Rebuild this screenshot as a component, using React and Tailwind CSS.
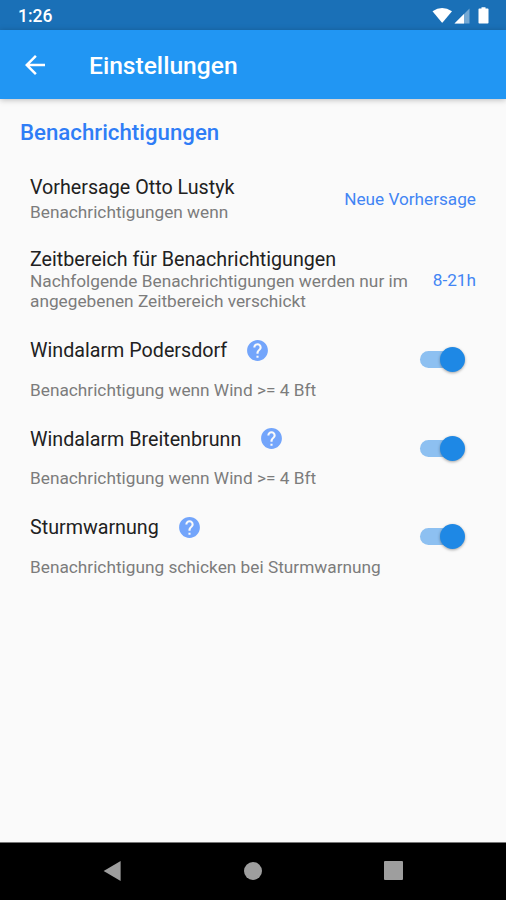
import React from "react";

function HelpIcon() {
  return (
    <svg viewBox="0 0 24 24" className="size-[25px] shrink-0" fill="#73a5fb">
      <path d="M12 2C6.48 2 2 6.48 2 12s4.48 10 10 10 10-4.480 10-10S17.520 2 12 2zm1 17h-2v-2h2v2zm2.070-7.750l-.9.920C13.450 12.900 13 13.500 13 15h-2v-.5c0-1.100.45-2.100 1.170-2.830l1.240-1.260c.370-.36.59-.86.59-1.410 0-1.100-.9-2-2-2s-2 .9-2 2H8c0-2.210 1.790-4 4-4s4 1.790 4 4c0 .88-.36 1.680-.93 2.250z" />
    </svg>
  );
}

function Toggle() {
  return (
    <span role="switch" aria-checked="true" className="flex h-[25px] w-[45px] shrink-0 items-center">
      <span className="h-[17px] w-[39px] rounded-full bg-[#8dc0f1]" />
      <span className="-ml-[19px] size-[25px] shrink-0 rounded-full bg-[#1e88e5] shadow-[0_1px_3px_rgba(0,0,0,0.35)]" />
    </span>
  );
}

function SwitchRow({ title, hint }) {
  return (
    <div className="flex h-[88.5px] justify-between pr-[41px] pl-[30px]">
      <div className="whitespace-nowrap">
        <div className="flex h-[26px] items-center gap-[18px] text-[19.7px] text-[#212121]">
          <span className="pt-[2px]">{title}</span>
          <HelpIcon />
        </div>
        <p className="mt-[16.5px] text-[17.25px] leading-[20px] text-[#7c7c7c]">{hint}</p>
      </div>
      <div className="mt-[10px]">
        <Toggle />
      </div>
    </div>
  );
}

export default function App() {
  return (
    <div className="flex h-[900px] w-[506px] flex-col overflow-hidden bg-[#fafafa] font-['Roboto',sans-serif]">
      <div className="flex h-[30px] shrink-0 items-center justify-between bg-[#1a70b7] pr-[16px] pl-[18px] text-white">
        <span className="mt-[2px] text-[17.5px] leading-[20px] font-medium">1:26</span>
        <svg viewBox="0 0 58 18" className="mt-px h-[18px] w-[58px]" fill="#fff">
          <path d="M0.500 4.200Q10 -2.400 20 4.200L10.800 15.300Q10.200 16 9.600 15.300Z" />
          <path d="M37.500 1.500V16.500H22.500Z" opacity="0.4" />
          <path d="M32 7V16.500H22.500Z" />
          <path d="M49.500 1.500V.3h4v1.200h2.200q.8 0 .8.800v13.400q0 .8-.8.800h-8.400q-.8 0-.8-.8V2.300q0-.8.8-.8z" />
        </svg>
      </div>
      <header className="z-10 flex h-[69px] shrink-0 items-center bg-[#2196f3] pl-[20px] text-white shadow-[0_1px_6px_rgba(0,0,0,0.25)]">
        <svg viewBox="0 0 24 24" className="size-[30px]" fill="currentColor">
          <path d="M20 11H7.830l5.590-5.590L12 4l-8 8 8 8 1.410-1.410L7.830 13H20v-2z" />
        </svg>
        <h1 className="mt-[2px] ml-[39px] text-[24.600px] leading-[30px] font-medium">Einstellungen</h1>
      </header>
      <main className="grow pt-[20px]">
        <h2 className="pl-[20px] text-[22.250px] leading-[26px] font-medium text-[#2f7df6]">Benachrichtigungen</h2>
        <div className="mt-[30px] flex h-[73px] items-start justify-between pr-[30px] pl-[30px]">
          <div>
            <h3 className="text-[19.700px] leading-[26px] text-[#212121]">Vorhersage Otto Lustyk</h3>
            <p className="mt-px text-[17.250px] leading-[20px] text-[#7c7c7c]">Benachrichtigungen wenn</p>
          </div>
          <span className="mt-[14px] text-[17.200px] leading-[20px] text-[#4285f4]">Neue Vorhersage</span>
        </div>
        <div className="flex h-[89px] items-start justify-between pr-[30px] pl-[30px] whitespace-nowrap">
          <div>
            <h3 className="text-[19.700px] leading-[24px] text-[#212121]">Zeitbereich für Benachrichtigungen</h3>
            <p className="text-[17.250px] leading-[19.500px] text-[#7c7c7c]">
              Nachfolgende Benachrichtigungen werden nur im
              <br />
              angegebenen Zeitbereich verschickt
            </p>
          </div>
          <span className="mt-[22px] text-[17.200px] leading-[20px] text-[#4285f4]">8-21h</span>
        </div>
        <SwitchRow title="Windalarm Podersdorf" hint="Benachrichtigung wenn Wind >= 4 Bft" />
        <SwitchRow title="Windalarm Breitenbrunn" hint="Benachrichtigung wenn Wind >= 4 Bft" />
        <SwitchRow title="Sturmwarnung" hint="Benachrichtigung schicken bei Sturmwarnung" />
      </main>
      <nav className="flex h-[58px] shrink-0 items-center justify-between border-t border-[#777] bg-black pr-[103px] pb-[2px] pl-[102px]">
        <svg viewBox="0 0 20 22" className="size-[20px]" fill="#9e9e9e">
          <path d="M0.800 11L19.500 0V22Z" />
        </svg>
        <span className="size-[18px] rounded-full bg-[#9e9e9e]" />
        <span className="size-[19px] rounded-[1px] bg-[#9e9e9e]" />
      </nav>
    </div>
  );
}
